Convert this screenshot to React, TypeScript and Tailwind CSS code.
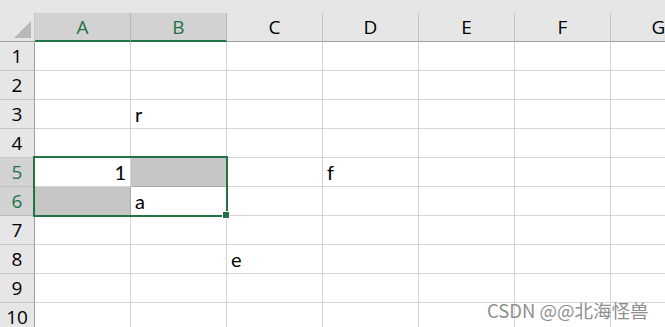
import React from "react";

const COLS = ["A", "B", "C", "D", "E", "F", "G"];
const ROWS = [1, 2, 3, 4, 5, 6, 7, 8, 9, 10];

const cellData: Record<string, { text: string; align?: "right" }> = {
  B3: { text: "r" },
  A5: { text: "1", align: "right" },
  B6: { text: "a" },
  D5: { text: "f" },
  C8: { text: "e" },
};
const selectedFill = new Set(["B5", "A6"]);
const selCols = new Set(["A", "B"]);
const selRows = new Set([5, 6]);

const headFont = { fontFamily: '"Open Sans", "Noto Sans", sans-serif' };
const cellFont = { fontFamily: 'Lato, "Noto Sans", sans-serif' };

export default function App() {
  return (
    <div className="relative w-[665px] h-[327px] overflow-hidden bg-white">
      <div className="h-[13px] bg-[#e6e6e6]" />
      {/* Column header row */}
      <div className="flex h-[29px]" style={headFont}>
        <div className="relative w-[35px] shrink-0 bg-[#e6e6e6] border-r border-b border-r-[#c8c8c8] border-b-[#9e9e9e]">
          <div className="absolute right-[3px] bottom-[3px] w-0 h-0 border-l-[17px] border-l-transparent border-b-[17px] border-b-[#b8b8b8]" />
        </div>
        {COLS.map((c) =>
          selCols.has(c) ? (
            <div
              key={c}
              className="w-[96px] shrink-0 flex items-center justify-center pt-[1px] bg-[#d2d2d2] border-r border-r-[#b8b8b8] border-b-2 border-b-[#217346] text-[#217346] text-[19px]"
            >
              {c}
            </div>
          ) : (
            <div
              key={c}
              className="w-[96px] shrink-0 flex items-center justify-center bg-[#e6e6e6] border-r border-r-[#c6c6c6] border-b border-b-[#9e9e9e] text-black text-[19px]"
            >
              {c}
            </div>
          )
        )}
      </div>
      {/* Rows */}
      {ROWS.map((r) => (
        <div key={r} className="flex h-[29px]">
          <div
            className={
              selRows.has(r)
                ? "w-[35px] shrink-0 flex items-center justify-center bg-[#d2d2d2] border-r border-b border-r-[#9e9e9e] border-b-[#bdbdbd] text-[#217346] text-[19px]"
                : "w-[35px] shrink-0 flex items-center justify-center bg-[#e6e6e6] border-r border-b border-r-[#9e9e9e] border-b-[#c6c6c6] text-black text-[19px]"
            }
            style={headFont}
          >
            {r}
          </div>
          {COLS.map((c) => {
            const id = `${c}${r}`;
            const d = cellData[id];
            const sel = selectedFill.has(id);
            return (
              <div
                key={id}
                className={
                  (sel
                    ? "bg-[#c6c6c6] border-r-[#a8a8a8] border-b-[#a8a8a8] "
                    : "bg-white border-r-[#d4d4d4] border-b-[#d4d4d4] ") +
                  "w-[96px] shrink-0 border-r border-b flex items-end pb-[1px] px-[4px] text-[20px] leading-[26px] text-black whitespace-nowrap " +
                  (d?.align === "right" ? "justify-end" : "justify-start")
                }
                style={cellFont}
              >
                {d?.text ?? ""}
              </div>
            );
          })}
        </div>
      ))}
      {/* Selection border */}
      <div className="absolute left-[33px] top-[156px] w-[195px] h-[61px] border-2 border-[#217346]" />
      <div className="absolute left-[222px] top-[211px] w-[8px] h-[8px] bg-[#217346] border border-white" />
      {/* Watermark */}
      <div
        className="absolute left-[487px] top-[298px] text-[18.5px] leading-[24px] text-[#8f8f8f] whitespace-nowrap"
        style={{ fontFamily: '"Noto Sans CJK SC", "Noto Sans", sans-serif' }}
      >
        CSDN @@北海怪兽
      </div>
    </div>
  );
}
